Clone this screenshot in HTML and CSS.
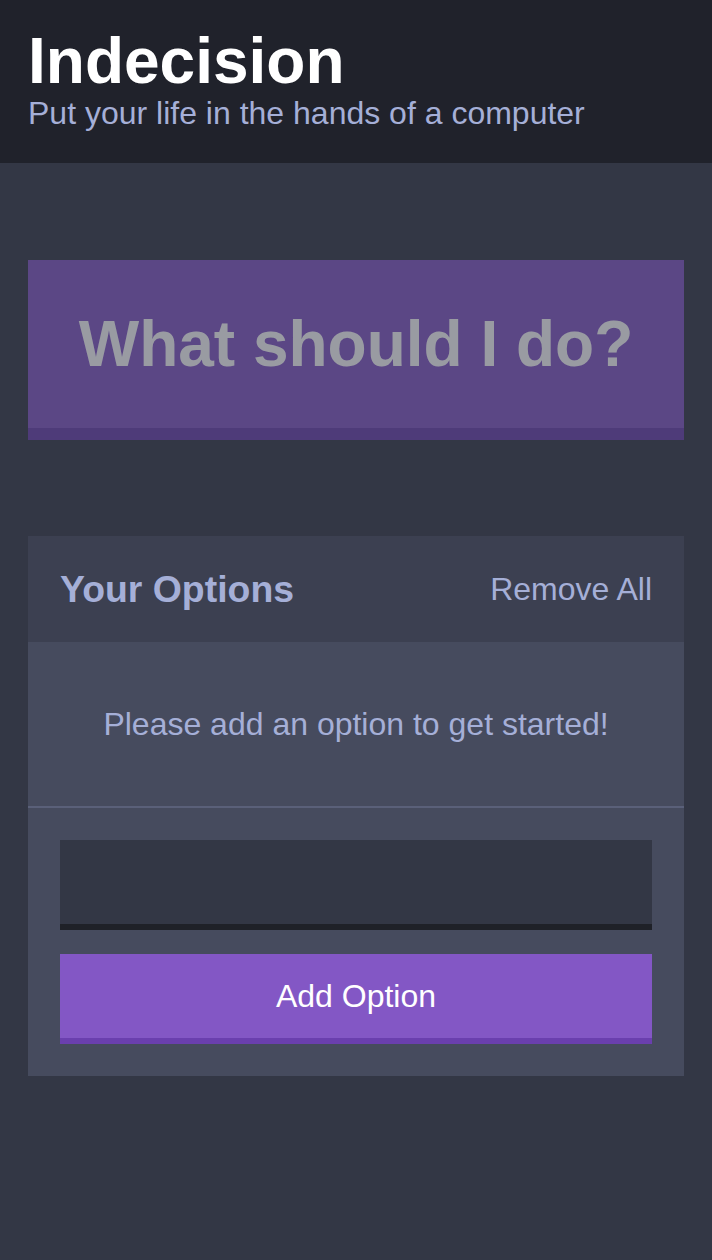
FILE: index.html
```html
<!DOCTYPE html>
<html lang="en">
<head>
<meta charset="utf-8">
<title>Indecision</title>
<link rel="stylesheet" href="styles.css">
</head>
<body>
<header class="header">
  <div class="container">
    <h1 class="header__title">Indecision</h1>
    <h2 class="header__subtitle">Put your life in the hands of a computer</h2>
  </div>
</header>
<main class="container">
  <button class="big-button" disabled>What should I do?</button>
  <div class="widget">
    <div class="widget-header">
      <h3 class="widget-header__title">Your Options</h3>
      <button class="button button--link">Remove All</button>
    </div>
    <p class="widget__message">Please add an option to get started!</p>
    <form class="add-option">
      <input class="add-option__input" type="text" name="option">
      <button class="button" type="button">Add Option</button>
    </form>
  </div>
</main>
</body>
</html>
```
FILE: styles.css
```css
* {
  box-sizing: border-box;
}

body {
  margin: 0;
  background: #333745;
  font-family: "Liberation Sans", Arial, sans-serif;
  font-size: 32px;
  color: #ffffff;
}

.container {
  padding: 0 28px;
}

.header {
  background: #20222b;
  padding: 28px 0 31px;
  margin-bottom: 97px;
}

.header__title {
  margin: 0;
  font-size: 64px;
  line-height: 66px;
  font-weight: bold;
  color: #ffffff;
}

.header__subtitle {
  margin: 0;
  font-size: 32px;
  line-height: 38px;
  font-weight: normal;
  color: #a5afd7;
}

.big-button {
  display: block;
  width: 100%;
  background: #8357c5;
  border: none;
  border-bottom: 12px solid #6a3fae;
  color: #ffffff;
  font-family: inherit;
  font-weight: bold;
  font-size: 64px;
  line-height: 72px;
  padding: 48px;
  margin: 0 0 96px;
}

.big-button:disabled {
  opacity: 0.5;
}

.widget {
  background: #464b5e;
  margin-bottom: 96px;
}

.widget-header {
  display: flex;
  justify-content: space-between;
  align-items: center;
  background: #3c4051;
  padding: 32px;
}

.widget-header__title {
  margin: 0;
  font-size: 37.4px;
  line-height: 42px;
  font-weight: bold;
  color: #a5afd7;
}

.button {
  display: block;
  background: #8357c5;
  border: none;
  border-bottom: 6px solid #6a3fae;
  color: #ffffff;
  font-family: inherit;
  font-size: 32px;
  line-height: 36px;
  padding: 24px;
}

.button--link {
  background: none;
  border: none;
  padding: 0;
  color: #a5afd7;
}

.widget__message {
  margin: 0;
  padding: 64px;
  font-size: 32px;
  line-height: 36px;
  text-align: center;
  color: #a5afd7;
  border-bottom: 2px solid #5a6079;
}

.add-option {
  display: flex;
  flex-direction: column;
  gap: 24px;
  padding: 32px;
  margin: 0;
}

.add-option__input {
  display: block;
  width: 100%;
  height: 90px;
  background: #333745;
  border: none;
  border-bottom: 6px solid #1f2128;
  color: #a5afd7;
  font-family: inherit;
  font-size: 32px;
  padding: 24px;
  outline: none;
}

.add-option .button {
  width: 100%;
  height: 90px;
  padding: 0 24px;
}
```
